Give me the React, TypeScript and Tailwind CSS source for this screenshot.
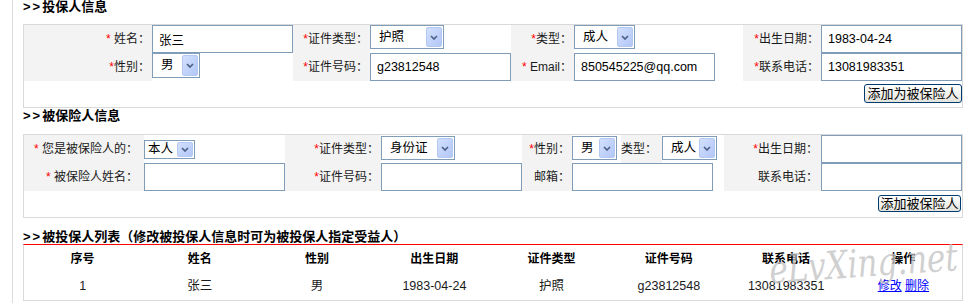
import React from 'react';

const font = "font-['Liberation_Sans','Noto_Sans_CJK_SC',sans-serif]";

const Star = ({ gap = false }: { gap?: boolean }) => (
  <span className="text-[#ff0000]">{gap ? '* ' : '*'}</span>
);

const Label: React.FC<{ children: React.ReactNode; className?: string }> = ({ children, className = '' }) => (
  <div className={`flex items-center justify-end bg-[#f3f3f3] pr-[2px] text-[12px] text-[#1a1a1a] ${className}`}>
    <span className="whitespace-nowrap">{children}</span>
  </div>
);

const Arrow = () => (
  <span className="flex h-full w-[16px] items-center justify-center rounded-[2px] border border-[#b5c8f3] bg-gradient-to-br from-[#d3e0fd] to-[#b2c7f7]">
    <svg width="8" height="5" viewBox="0 0 8 5">
      <path d="M1 1l3 3 3-3" stroke="#4d6185" strokeWidth="1.7" fill="none" />
    </svg>
  </span>
);

const Select: React.FC<{ value: string; className: string; pl?: string }> = ({ value, className, pl = 'pl-[8px]' }) => (
  <div className={`flex items-stretch justify-between border border-[#7f9db9] bg-white py-[1px] pr-[1px] ${pl} text-[12.5px] text-black ${className}`}>
    <span className="flex items-center whitespace-nowrap">{value}</span>
    <Arrow />
  </div>
);

const Field: React.FC<{ value?: string; className?: string }> = ({ value = '', className = 'w-[141px]' }) => (
  <input
    readOnly
    value={value}
    className={`h-[28px] border border-[#7f9db9] bg-white pl-[6px] text-[12.5px] text-black outline-none ${className}`}
  />
);

const XpButton: React.FC<{ children: React.ReactNode; className?: string }> = ({ children, className = '' }) => (
  <button className={`flex items-center justify-center rounded-[3px] border border-[#003c74] bg-gradient-to-b from-white to-[#e3e3dc] px-[1px] text-[13px] leading-none text-black ${className}`}>
    {children}
  </button>
);

const Heading: React.FC<{ children: React.ReactNode; className?: string }> = ({ children, className = '' }) => (
  <div className={`text-[13px] font-bold leading-[14px] text-black ${className}`}>
    <span className="tracking-[2px]">&gt;&gt;</span>
    {children}
  </div>
);

const cell = 'flex bg-white';

export default function App() {
  const headers = ['序号', '姓名', '性别', '出生日期', '证件类型', '证件号码', '联系电话', '操作'];
  const row = ['1', '张三', '男', '1983-04-24', '护照', 'g23812548', '13081983351'];

  return (
    <div className={`relative h-[305px] w-[973px] overflow-hidden bg-white ${font}`}>
      <div className="ml-[12px] h-[303px] w-[951px] border-l border-[#dcdcdc] pl-[10px]">
        <div className="w-[940px]">
          {/* 投保人信息 */}
          <Heading className="h-[24px]">投保人信息</Heading>
          <div className="h-[84px] border border-[#d9d9d9]">
            <div className="grid grid-cols-[128px_141px_77px_141px_63px_169px_78px_141px] grid-rows-[28px_28px]">
              <Label><Star gap />姓名：</Label>
              <div className={cell}><Field value="张三" /></div>
              <Label><Star />证件类型：</Label>
              <div className={cell}><Select value="护照" className="h-[24px] w-[74px]" /></div>
              <Label><Star />类型：</Label>
              <div className={cell}><Select value="成人" className="h-[24px] w-[61px]" /></div>
              <Label><Star />出生日期：</Label>
              <div className={cell}><Field value="1983-04-24" /></div>

              <Label><Star />性别：</Label>
              <div className={cell}><Select value="男" className="h-[25px] w-[48px]" /></div>
              <Label><Star />证件号码：</Label>
              <div className={cell}><Field value="g23812548" /></div>
              <Label><Star gap />Email：</Label>
              <div className={cell}><Field value="850545225@qq.com" /></div>
              <Label><Star />联系电话：</Label>
              <div className={cell}><Field value="13081983351" /></div>
            </div>
            <div className="flex h-[26px] justify-end pt-[3px]">
              <XpButton className="h-[19px] w-[98px]">添加为被保险人</XpButton>
            </div>
          </div>

          {/* 被保险人信息 */}
          <Heading className="h-[26px] pt-[1px]">被保险人信息</Heading>
          <div className="h-[84px] border border-[#d9d9d9]">
            <div className="grid grid-cols-[120px_141px_96px_141px_50px_152px_97px_141px] grid-rows-[28px_28px]">
              <Label className="pr-[6px]"><Star gap />您是被保险人的：</Label>
              <div className={`${cell} items-center`}><Select value="本人" pl="pl-[3px]" className="h-[19px] w-[51px]" /></div>
              <Label><Star />证件类型：</Label>
              <div className={`${cell} items-start pt-[1px]`}><Select value="身份证" className="h-[24px] w-[74px]" /></div>
              <Label><Star />性别：</Label>
              <div className={`${cell} items-stretch`}>
                <div className="flex items-start pt-[1px]">
                  <Select value="男" className="h-[24px] w-[45px]" />
                </div>
                <div className="ml-[4px] flex w-[41px] items-center bg-[#f3f3f3] text-[12px] text-[#1a1a1a]">类型：</div>
                <div className="flex items-start pt-[1px]">
                  <Select value="成人" className="h-[24px] w-[55px]" />
                </div>
              </div>
              <Label className="pr-[3px]"><Star />出生日期：</Label>
              <div className={cell}><Field /></div>

              <Label className="pr-[6px]"><Star gap />被保险人姓名：</Label>
              <div className={cell}><Field /></div>
              <Label><Star />证件号码：</Label>
              <div className={cell}><Field /></div>
              <Label>邮箱：</Label>
              <div className={cell}><Field /></div>
              <Label className="pr-[3px]">联系电话：</Label>
              <div className={cell}><Field /></div>
            </div>
            <div className="flex h-[26px] justify-end pr-[1px] pt-[4px]">
              <XpButton className="h-[17px] w-[83px]">添加被保险人</XpButton>
            </div>
          </div>

          {/* 被投保人列表 */}
          <Heading className="h-[26px] pt-[12px]">被投保人列表（修改被投保人信息时可为被投保人指定受益人）</Heading>
          <div className="relative h-[57px] border border-t-[#ff0000] border-x-[#d9d9d9] border-b-[#d9d9d9]">
            <div className="grid h-[28px] grid-cols-8 items-center text-center text-[12px] font-bold text-black">
              {headers.map((h) => (
                <div key={h}>{h}</div>
              ))}
            </div>
            <div className="grid h-[26px] grid-cols-8 items-center text-center text-[12.5px] text-[#1a1a1a]">
              {row.map((v, i) => (
                <div key={i}>{v}</div>
              ))}
              <div className="text-[12px]">
                <a href="#" className="text-[#0000ff] underline">修改</a>{' '}
                <a href="#" className="text-[#0000ff] underline">删除</a>
              </div>
            </div>
            {/* watermark over the table */}
            <span className="pointer-events-none absolute left-[745px] top-[3px] -rotate-[4deg] scale-y-125 font-['DejaVu_Serif',serif] text-[31px] italic leading-none text-[#c4c4c4]/80">
              eLvXing.net
            </span>
          </div>
        </div>
      </div>
    </div>
  );
}
